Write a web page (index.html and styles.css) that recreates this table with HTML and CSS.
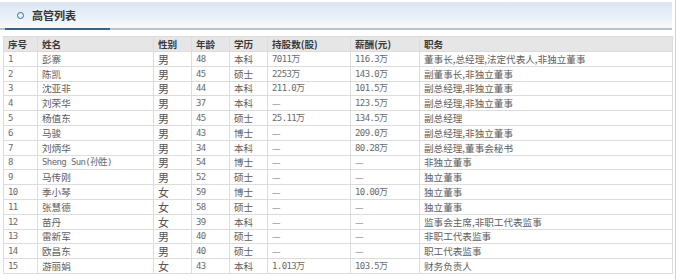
FILE: index.html
```html
<!DOCTYPE html>
<html lang="zh">
<head>
<meta charset="utf-8">
<title>高管列表</title>
<link rel="stylesheet" href="styles.css">
</head>
<body>
<div class="panel">
  <div class="titlebar">
    <span class="dot"></span>
    <h2 class="title">高管列表</h2>
  </div>
  <div class="rule"><span class="rule-accent"></span></div>
  <table class="grid">
    <colgroup>
      <col class="c-no"><col class="c-name"><col class="c-sex"><col class="c-age"><col class="c-edu"><col class="c-share"><col class="c-pay"><col class="c-pos">
    </colgroup>
    <thead>
      <tr><th>序号</th><th>姓名</th><th>性别</th><th>年龄</th><th>学历</th><th>持股数(股)</th><th>薪酬(元)</th><th>职务</th></tr>
    </thead>
    <tbody>
      <tr><td class="num">1</td><td>彭寨</td><td class="sex">男</td><td class="num">48</td><td>本科</td><td class="num">7011万</td><td class="num">116.3万</td><td>董事长,总经理,法定代表人,非独立董事</td></tr>
      <tr><td class="num">2</td><td>陈凯</td><td class="sex">男</td><td class="num">45</td><td>硕士</td><td class="num">2253万</td><td class="num">143.0万</td><td>副董事长,非独立董事</td></tr>
      <tr><td class="num">3</td><td>沈亚非</td><td class="sex">男</td><td class="num">44</td><td>本科</td><td class="num">211.0万</td><td class="num">101.5万</td><td>副总经理,非独立董事</td></tr>
      <tr><td class="num">4</td><td>刘荣华</td><td class="sex">男</td><td class="num">37</td><td>本科</td><td class="dash">—</td><td class="num">123.5万</td><td>副总经理,非独立董事</td></tr>
      <tr><td class="num">5</td><td>杨值东</td><td class="sex">男</td><td class="num">45</td><td>硕士</td><td class="num">25.11万</td><td class="num">134.5万</td><td>副总经理</td></tr>
      <tr><td class="num">6</td><td>马骏</td><td class="sex">男</td><td class="num">43</td><td>博士</td><td class="dash">—</td><td class="num">209.0万</td><td>副总经理,非独立董事</td></tr>
      <tr><td class="num">7</td><td>刘炳华</td><td class="sex">男</td><td class="num">34</td><td>本科</td><td class="dash">—</td><td class="num">80.28万</td><td>副总经理,董事会秘书</td></tr>
      <tr><td class="num">8</td><td class="num">Sheng Sun(孙胜)</td><td class="sex">男</td><td class="num">54</td><td>博士</td><td class="dash">—</td><td class="dash">—</td><td>非独立董事</td></tr>
      <tr><td class="num">9</td><td>马传刚</td><td class="sex">男</td><td class="num">52</td><td>硕士</td><td class="dash">—</td><td class="dash">—</td><td>独立董事</td></tr>
      <tr><td class="num">10</td><td>季小琴</td><td class="sex">女</td><td class="num">59</td><td>博士</td><td class="dash">—</td><td class="num">10.00万</td><td>独立董事</td></tr>
      <tr><td class="num">11</td><td>张慧德</td><td class="sex">女</td><td class="num">58</td><td>硕士</td><td class="dash">—</td><td class="dash">—</td><td>独立董事</td></tr>
      <tr><td class="num">12</td><td>苗丹</td><td class="sex">女</td><td class="num">39</td><td>本科</td><td class="dash">—</td><td class="dash">—</td><td>监事会主席,非职工代表监事</td></tr>
      <tr><td class="num">13</td><td>雷新军</td><td class="sex">男</td><td class="num">40</td><td>硕士</td><td class="dash">—</td><td class="dash">—</td><td>非职工代表监事</td></tr>
      <tr><td class="num">14</td><td>欧昌东</td><td class="sex">男</td><td class="num">40</td><td>硕士</td><td class="dash">—</td><td class="dash">—</td><td>职工代表监事</td></tr>
      <tr><td class="num">15</td><td>游丽娟</td><td class="sex">女</td><td class="num">43</td><td>本科</td><td class="num">1.013万</td><td class="num">103.5万</td><td>财务负责人</td></tr>
    </tbody>
  </table>
</div>
</body>
</html>
```
FILE: styles.css
```css
html, body {
  margin: 0;
  padding: 0;
  background: #fff;
}
body {
  font-family: "Noto Sans CJK SC", "Liberation Sans", sans-serif;
  color: #555;
}
.panel {
  width: 676px;
  height: 280px;
  border-right: 1px solid #cfd3d6;
  box-sizing: border-box;
  padding-top: 2px;
}
.titlebar {
  width: 672px;
  height: 26px;
  display: flex;
  align-items: center;
  background: linear-gradient(to bottom, #dbe6f3 0%, #e9f0f8 55%, #f8fbfd 100%);
}
.dot {
  width: 5px;
  height: 5px;
  border: 1.5px solid #2f6cb0;
  border-radius: 50%;
  margin-left: 17px;
  margin-right: 8px;
}
.title {
  margin: 0;
  font-size: 11px;
  font-weight: 700;
  color: #333;
  line-height: 26px;
}
.rule {
  width: 672px;
  height: 2px;
  background: #b9c3cc;
  display: flex;
}
.rule-accent {
  width: 105px;
  height: 2px;
  margin-left: 5px;
  background: #35628f;
}
.grid {
  margin-top: 6px;
  margin-left: 3px;
  width: 669px;
  border-collapse: collapse;
  table-layout: fixed;
  border: 1px solid #dcdcdc;
  font-size: 9.6px;
}
.c-no { width: 34px; }
.c-name { width: 116px; }
.c-sex { width: 38px; }
.c-age { width: 38px; }
.c-edu { width: 38px; }
.c-share { width: 83px; }
.c-pay { width: 69px; }
.c-pos { width: 253px; }
.grid th, .grid td {
  border: 1px solid #dcdcdc;
  padding: 0 0 0 4px;
  text-align: left;
  white-space: nowrap;
  overflow: hidden;
  line-height: 12px;
}
.grid th {
  height: 14px;
  background: #e6e6e6;
  color: #3a3a3a;
  font-weight: 700;
}
.grid td {
  height: 13.8px;
  color: #5e5e5e;
}
.grid td.num {
  font-family: "DejaVu Sans Mono", "Noto Sans CJK SC", monospace;
  font-size: 9px;
  letter-spacing: -0.6px;
  color: #6a6a6a;
}
.grid td.sex {
  font-size: 11px;
  line-height: 12px;
  color: #555;
}
.grid td.dash {
  color: #8a8a8a;
}
```
